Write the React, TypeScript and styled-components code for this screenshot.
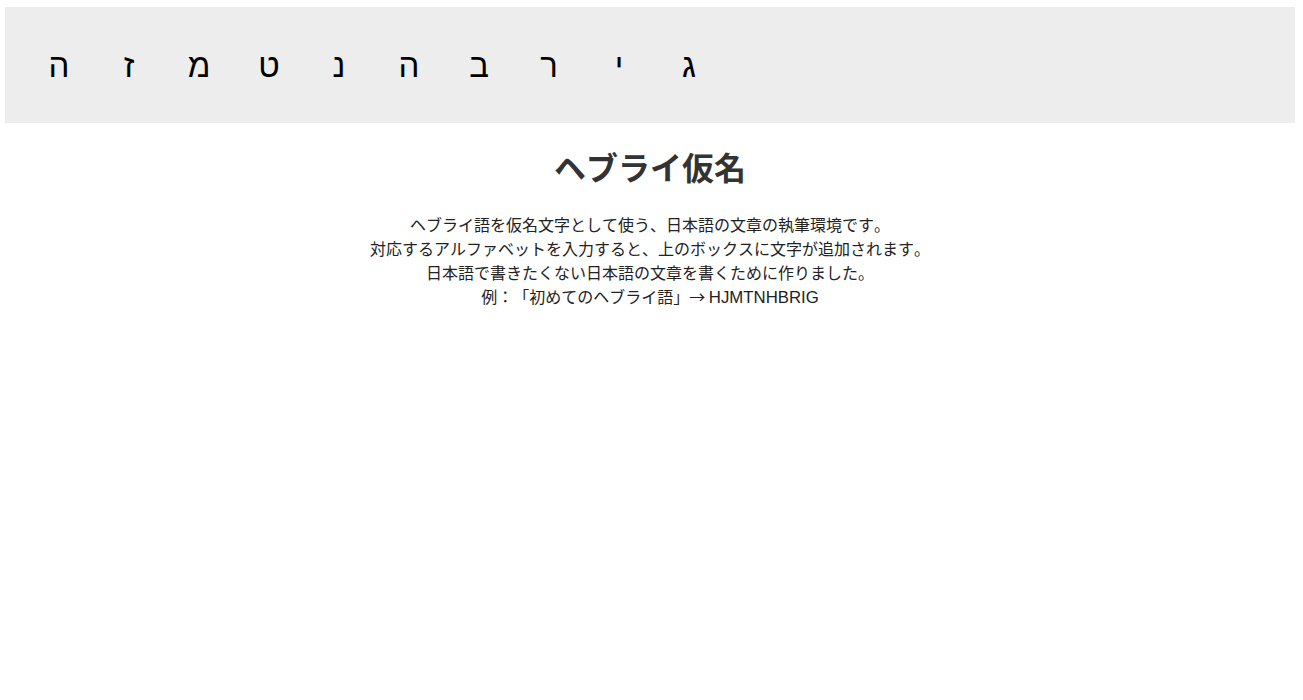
import React from "react";
import styled, { createGlobalStyle } from "styled-components";

const GlobalStyle = createGlobalStyle`
  html, body {
    margin: 0;
    padding: 0;
    background: #ffffff;
  }
  body {
    font-family: "Noto Sans CJK JP", "Liberation Sans", sans-serif;
    color: #333333;
    text-spacing-trim: space-all;
  }
`;

const Page = styled.div`
  padding: 7px 8px 0 5px;
`;

const LetterBox = styled.div`
  height: 116px;
  background: #ededed;
  display: flex;
  align-items: center;
  padding-left: 19px;
  direction: ltr;
`;

const Letter = styled.span`
  width: 70px;
  text-align: center;
  font-family: "Liberation Sans", "DejaVu Sans", sans-serif;
  font-size: 33px;
  line-height: 1;
  color: #000000;
`;

const Title = styled.h1`
  margin: 23px 0 0;
  text-align: center;
  font-family: "Noto Sans CJK JP", sans-serif;
  font-weight: 700;
  font-size: 32px;
  line-height: 40px;
  color: #333333;
  text-spacing-trim: space-all;
`;

const Description = styled.p`
  margin: 26px 0 0;
  text-align: center;
  font-family: "Noto Sans CJK JP", "Liberation Sans", sans-serif;
  font-size: 16px;
  line-height: 24px;
  color: #222222;
  text-spacing-trim: space-all;
  font-kerning: none;
  font-feature-settings: "kern" 0, "palt" 0;
`;

const Latin = styled.span`
  font-family: "Liberation Sans", sans-serif;
  font-size: 16.8px;
`;

const letters = ["ה", "ז", "מ", "ט", "נ", "ה", "ב", "ר", "י", "ג"];

export default function App() {
  return (
    <>
      <GlobalStyle />
      <Page>
        <LetterBox>
          {letters.map((l, i) => (
            <Letter key={i}>{l}</Letter>
          ))}
        </LetterBox>
        <Title>ヘブライ仮名</Title>
        <Description>
          ヘブライ語を仮名文字として使う、日本語の文章の執筆環境です。
          <br />
          対応するアルファベットを入力すると、上のボックスに文字が追加されます。
          <br />
          日本語で書きたくない日本語の文章を書くために作りました。
          <br />
          例：「初めてのヘブライ語」→ <Latin>HJMTNHBRIG</Latin>
        </Description>
      </Page>
    </>
  );
}
